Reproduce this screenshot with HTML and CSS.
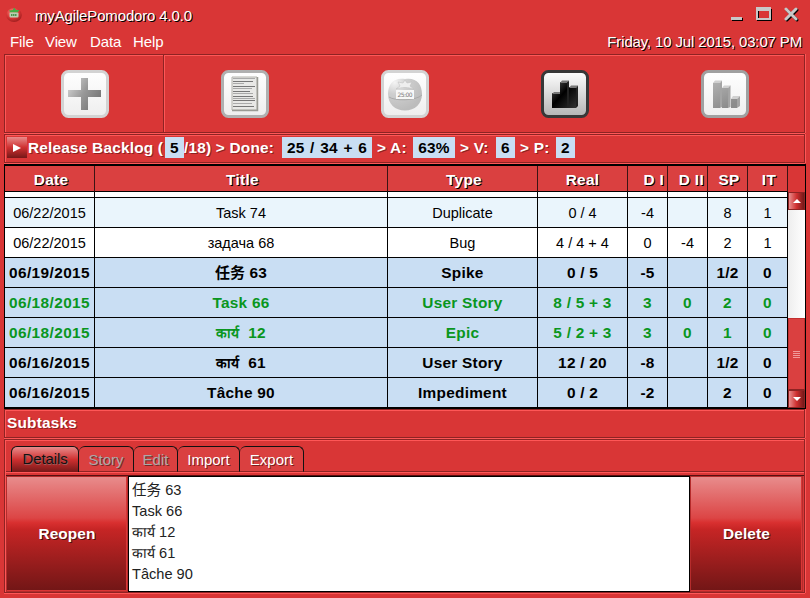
FILE: index.html
```html
<!DOCTYPE html>
<html lang="en">
<head>
<meta charset="utf-8">
<title>myAgilePomodoro 4.0.0</title>
<link rel="stylesheet" href="styles.css">
</head>
<body>
<div class="window">
  <header class="titlebar">
    <svg class="logo" width="16" height="16" viewBox="0 0 16 16">
      <defs><radialGradient id="tomato" cx=".4" cy=".3" r=".7"><stop offset="0" stop-color="#ff8a80"/><stop offset=".6" stop-color="#d83434"/><stop offset="1" stop-color="#a32020"/></radialGradient></defs>
      <ellipse cx="8" cy="8" rx="7.800" ry="7" fill="url(#tomato)"/>
      <path d="M3 3.500l4-.5 1-2.500L10 3l3.500 0-2 2.500h-7z" fill="#3fb045"/>
      <rect x="3.500" y="5.500" width="9" height="5" rx="1" fill="#b9cfb2"/><path d="M5 8h6" stroke="#4f9450" stroke-width="2" stroke-dasharray="1.500 .5"/>
    </svg>
    <h1 class="title">myAgilePomodoro 4.0.0</h1>
    <svg class="controls" width="72" height="18" viewBox="0 0 72 18">
      <path d="M2 11h11v3H2z" fill="#000"/><path d="M1 10h11v3H1z" fill="#c8c8c8"/>
      <path d="M28 3h13v10H28z" fill="none" stroke="#000" stroke-width="2"/>
      <path d="M26 0h15v13H26zM28 4v7h11V4z" fill="#c8c8c8" fill-rule="evenodd"/>
      <path d="M57 3l10 10m0-10L57 13" stroke="#000" stroke-width="3" stroke-linecap="round"/>
      <path d="M56 2l10 10m0-10L56 12" stroke="#c8c8c8" stroke-width="3" stroke-linecap="round"/>
    </svg>
  </header>
  <nav class="menubar">
    <span class="t-file">File</span><span class="t-view">View</span><span class="t-data">Data</span><span class="t-help">Help</span>
    <time class="clock">Friday, 10 Jul 2015, 03:07 PM</time>
  </nav>

  <section class="panel toolbar">
    <div class="tool first">
      <svg width="48" height="48" viewBox="0 0 48 48">
        <defs>
          <linearGradient id="face" x2="0" y2="1"><stop offset="0" stop-color="#fff"/><stop offset="1" stop-color="#eee"/></linearGradient>
          <linearGradient id="faceDark" x2="0" y2="1"><stop offset="0" stop-color="#fff"/><stop offset="1" stop-color="#b4b4b4"/></linearGradient>
          <linearGradient id="plus" x2="1" y2=".6"><stop offset="0" stop-color="#ddd"/><stop offset=".55" stop-color="#999"/><stop offset="1" stop-color="#777"/></linearGradient>
        </defs>
        <rect x="1.500" y="1.500" width="45" height="45" rx="6" fill="url(#face)" stroke="#d3d3d3" stroke-width="3"/>
        <path d="M20 8h7v12h13v7H27v13h-7V27H7v-7h13z" fill="url(#plus)"/>
      </svg>
    </div>
    <div class="tool">
      <svg width="48" height="48" viewBox="0 0 48 48">
        <rect x="1.500" y="1.500" width="45" height="45" rx="6" fill="url(#face)" stroke="#b0b0b0" stroke-width="3"/>
        <path d="M11 7h25v33H11z" fill="#e8e8e6" stroke="#b4b4ae"/><path d="M36.500 7v33.500H11" fill="none" stroke="#9a9a94" stroke-width="1.500"/>
        <path d="M12 8.500h22M12 13.500h11M12 18.500h19M12 23.500h20M12 28.500h22M12 33.500h19" stroke="#aaa"/>
        <path d="M12 11.500h20M12 16.500h22M12 21.500h17M12 26.500h20M12 30.500h22M12 36.500h21" stroke="#777"/>
      </svg>
    </div>
    <div class="tool">
      <svg width="48" height="48" viewBox="0 0 48 48">
        <defs><radialGradient id="grey" cx=".2" cy=".12" r=".9"><stop offset="0" stop-color="#f4f4f4"/><stop offset=".4" stop-color="#cfcfcf"/><stop offset="1" stop-color="#bcbcbc"/></radialGradient></defs>
        <rect x="1.500" y="1.500" width="45" height="45" rx="6" fill="url(#face)" stroke="#d3d3d3" stroke-width="3"/>
        <path d="M24 9C13 7 7 14 7 24s7 16.500 17 16.500S41 34 41 24 35 7 24 9z" fill="url(#grey)"/>
        <path d="M8 27c5 4 27 4 33-2" fill="none" stroke="#aaa"/>
        <path d="M17 12l5 1 2-3 2 3 5-1-2 4 4 3c-6-2-12-2-18 0l4-3z" fill="#eee" stroke="#bbb" stroke-width=".5"/>
        <path d="M15 20h18v9H15z" fill="#f7f7f7"/>
        <text class="lcd" x="24" y="27" text-anchor="middle" textLength="15">25:00</text>
      </svg>
    </div>
    <div class="tool">
      <svg width="48" height="48" viewBox="0 0 48 48">
        <defs><linearGradient id="bar" x2="1" y2="1"><stop offset="0" stop-color="#555"/><stop offset=".45" stop-color="#000"/><stop offset="1" stop-color="#333"/></linearGradient></defs>
        <rect x="1.500" y="1.500" width="45" height="45" rx="6" fill="url(#faceDark)" stroke="#383838" stroke-width="3"/>
        <path d="M11 23h8v15h-8zM19 12h9v26h-9zM28 17h7v21h-7z" fill="url(#bar)"/>
        <path d="M11 24l2-2h6v2zM19 13l2-2.500h7L26 13zM28 18l2-2.500h7L35 18z" fill="#777"/>
        <path d="M26 13l2-2.500V37l-2 1zM35 18l2-2.500V36l-2 2z" fill="#222"/>
      </svg>
    </div>
    <div class="tool">
      <svg width="48" height="48" viewBox="0 0 48 48">
        <defs><linearGradient id="barGrey" x2=".5" y2="1"><stop offset="0" stop-color="#b0b0b0"/><stop offset="1" stop-color="#8c8c8c"/></linearGradient></defs>
        <rect x="1.500" y="1.500" width="45" height="45" rx="6" fill="url(#face)" stroke="#a0a0a0" stroke-width="3"/>
        <path d="M12 13h7v25h-7zM21 18h6v20h-6zM30 29h6v9h-6z" fill="url(#barGrey)"/>
        <path d="M12 13l2-2.500h7L19 13zM21 18l2-2.500h7L27 18zM30 29l2-3h7l-3 3z" fill="#d0d0d0"/>
        <path d="M19 13l2-2.500V37l-2 1zM27 18l2.500-2.500V37L27 38zM36 29l3-3v10l-3 2z" fill="#a4a4a4"/>
      </svg>
    </div>
  </section>

  <section class="panel status">
    <button class="play"><svg width="8" height="8" viewBox="0 0 8 8"><path d="M0 0l8 4-8 4z" fill="#fff"/></svg></button>
    <span class="s1">Release Backlog (</span><b class="w19">5</b><span class="s2">/18) &gt; Done:</span><b class="w90">25 / 34 + 6</b><span class="s3">&gt; A:</span><b class="w42">63%</b><span class="s4">&gt; V:</span><b class="w19">6</b><span class="s5">&gt; P:</span><b class="w19">2</b>
  </section>

  <section class="grid">
    <div class="table">
      <div class="row head"><div>Date</div><div>Title</div><div>Type</div><div>Real</div><div class="right">D I</div><div class="right">D II</div><div>SP</div><div>IT</div></div>
      <div class="row sliver"><div></div><div></div><div></div><div></div><div></div><div></div><div></div><div></div></div>
      <div class="row tint"><div>06/22/2015</div><div>Task 74</div><div>Duplicate</div><div>0 / 4</div><div>-4</div><div></div><div>8</div><div>1</div></div>
      <div class="row"><div>06/22/2015</div><div>задача 68</div><div>Bug</div><div>4 / 4 + 4</div><div>0</div><div>-4</div><div>2</div><div>1</div></div>
      <div class="row sel"><div>06/19/2015</div><div><span class="han">任务</span> 63</div><div>Spike</div><div>0 / 5</div><div>-5</div><div></div><div>1/2</div><div>0</div></div>
      <div class="row sel done"><div>06/18/2015</div><div>Task 66</div><div>User Story</div><div>8 / 5 + 3</div><div>3</div><div>0</div><div>2</div><div>0</div></div>
      <div class="row sel done"><div>06/18/2015</div><div><span class="hindi">कार्य</span>  12</div><div>Epic</div><div>5 / 2 + 3</div><div>3</div><div>0</div><div>1</div><div>0</div></div>
      <div class="row sel"><div>06/16/2015</div><div><span class="hindi">कार्य</span>  61</div><div>User Story</div><div>12 / 20</div><div>-8</div><div></div><div>1/2</div><div>0</div></div>
      <div class="row sel"><div>06/16/2015</div><div>Tâche 90</div><div>Impediment</div><div>0 / 2</div><div>-2</div><div></div><div>2</div><div>0</div></div>
    </div>
    <div class="scroll">
      <div class="corner"></div>
      <button class="arrow"><svg width="8" height="4" viewBox="0 0 8 4"><path d="M4 0l4 4H0z" fill="#fff"/></svg></button>
      <div class="track"></div>
      <div class="thumb"><i></i><i></i><i></i><i></i></div>
      <button class="arrow"><svg width="8" height="4" viewBox="0 0 8 4"><path d="M4 4l4-4H0z" fill="#fff"/></svg></button>
    </div>
  </section>

  <section class="panel subtasks">Subtasks</section>

  <section class="panel bottom">
    <div class="tabs">
      <div class="tab active w68">Details</div><div class="tab off w55">Story</div><div class="tab off w44">Edit</div><div class="tab w62">Import</div><div class="tab w64">Export</div>
    </div>
    <div class="content">
      <button class="big">Reopen</button>
      <div class="list"><div>任务 63</div><div>Task 66</div><div><span class="hindi">कार्य</span> 12</div><div><span class="hindi">कार्य</span> 61</div><div>Tâche 90</div></div>
      <button class="big delete">Delete</button>
    </div>
  </section>
</div>
</body>
</html>
```
FILE: styles.css
```css
* { box-sizing: border-box; }
body { margin: 0; background: #d93636; font: 15px "Liberation Sans", "Noto Sans CJK SC", sans-serif; color: #fff; }
.window { width: 810px; height: 598px; overflow: hidden; background: #d93636; padding: 0 4px; display: flex; flex-direction: column; }
button { font: inherit; color: inherit; border: 0; padding: 0; margin: 0; display: flex; align-items: center; justify-content: center; }
span, b, time, .row > div { white-space: pre; }

.titlebar { height: 32px; display: flex; align-items: flex-start; padding: 7px 4px 0 2px; }
.title { margin: 0 0 0 13px; font: inherit; line-height: 18px; text-shadow: 1px 1px #000; flex: 1; letter-spacing: -0.15px; }
.logo { display: block; }
.menubar { height: 22px; display: flex; padding: 0 4px 0 6px; line-height: 20px; letter-spacing: -0.1px; }
.t-file { width: 35px; } .t-view { width: 45px; } .t-data { width: 43px; } .t-help { flex: 1; }
.clock { text-shadow: 1px 1px #000; letter-spacing: -0.15px; }

.panel { border: 1px solid #8e2323; box-shadow: inset 1px 1px #ff5757, 0 1px #ff5757, 1px 0 #ff5757; width: 801px; flex: none; }
.toolbar { height: 79px; margin-bottom: 1px; display: flex; padding-left: 1px; }
.tool { width: 160px; flex: none; display: flex; align-items: center; justify-content: center; }
.tool.first { width: 158px; padding-left: 1px; border-right: 1px solid #8e2323; box-shadow: 1px 0 #ff5757; margin-right: 1px; }
.tool svg { display: block; }
.lcd { font: 6px "DejaVu Sans", sans-serif; fill: #777; }

.status { height: 29px; margin-bottom: 1px; display: flex; align-items: flex-start; padding: 2px 0 0 2px; font-weight: bold; font-size: 15.400px; letter-spacing: .2px; line-height: 22px; text-shadow: 1px 1px #8e2020; }
.play { width: 20px; height: 21px; margin-right: 1px; background: linear-gradient(#e88c8c, #cf3030 50%, #751818); }
.status b { background: #c9def3; color: #000; text-align: center; text-shadow: none; height: 21px; flex: none; letter-spacing: .2px; }
.status .w90 { word-spacing: 1.200px; }
.status span { flex: none; }
.w19 { width: 19px; } .w90 { width: 90px; } .w42 { width: 42px; }
.s1 { width: 137px; } .s2 { width: 98px; } .s3, .s4, .s5 { width: 41px; padding-left: 5px; }

.grid { height: 245px; width: 802px; flex: none; display: flex; border: 1px solid #000; border-top-width: 2px; background: #000; }
.table { width: 783px; color: #000; }
.row { display: grid; grid-template-columns: 90px 293px 150px 90px 40px 40px 40px 40px; height: 30px; background: #fff; line-height: 31px; font-size: 14.500px; text-align: center; }
.row > div { border-right: 1px solid #000; border-bottom: 1px solid #000; overflow: hidden; }
.head { height: 26px; background: #da4040; color: #fff; font-weight: bold; font-size: 15.400px; letter-spacing: .3px; line-height: 27px; text-shadow: 1px 1px #000; }
.head > div { padding-left: 3px; border-right-color: #3a1414; }
.head > div:nth-child(4) { padding-left: 0; }
.head .right { text-align: right; padding-right: 3px; }
.sliver { height: 6px; }
.tint { background: #eaf5fc; }
.sel { background: #c9def3; font-weight: bold; font-size: 15.400px; letter-spacing: .25px; line-height: 30px; }
.sel > div:first-child { letter-spacing: .4px; }
.done { color: #0a961e; }
.hindi { font-size: .9em; letter-spacing: 0; }
.han { font-size: 15px; letter-spacing: 0; }

.scroll { width: 17px; display: flex; flex-direction: column; }
.corner { height: 26px; background: #d93636; }
.arrow { height: 18px; flex: none; background: linear-gradient(90deg, #e88c8c, #cf3030 50%, #751818); border: 1px solid #8e2323; }
.track { height: 108px; flex: none; background: linear-gradient(90deg, #eee, #fff); }
.thumb { flex: 1; background: #da4040; border: 1px solid #c22f2f; border-bottom-color: #8e2323; display: flex; flex-direction: column; align-items: center; justify-content: center; gap: 1px; }
.thumb i { width: 7px; height: 1px; background: #f09a9a; }

.subtasks { height: 29px; margin-bottom: 1px; padding-left: 2px; font-weight: bold; font-size: 15.400px; letter-spacing: .2px; line-height: 26px; text-shadow: 1px 1px #8e2020; }
.bottom { height: 154px; padding: 6px 0 0 1px; display: flex; flex-direction: column; }
.tabs { height: 26px; display: flex; padding-left: 5px; border-bottom: 1px solid #8e2323; box-shadow: 0 1px #ff5757; }
.tab { height: 26px; border: 1px solid #111; border-bottom-color: #8e2323; border-left-width: 0; border-radius: 6px 6px 0 0; background: #da4040; text-align: center; line-height: 26px; text-shadow: 1px 1px #7a1d1d; }
.tab.active { border-left-width: 1px; border-bottom: 0; background: linear-gradient(#e88c8c, #cf3030 50%, #751818); color: #111; line-height: 24px; text-shadow: 1px 1px #9b5a5a; letter-spacing: -0.1px; }
.tab.off { color: #aaa; text-shadow: 1px 1px #762929; }
.w68 { width: 68px; } .w55 { width: 55px; } .w44 { width: 44px; } .w62 { width: 62px; } .w64 { width: 64px; }
.content { margin-top: 3px; flex: 1; display: flex; border-top: 1px solid #571010; }
.big { width: 122px; background: linear-gradient(#e88c8c, #dc4545 36%, #d93030 40%, #c62525 46%, #711616); border: 1px solid #b52c2c; box-shadow: inset -1px -1px #d93636; font-weight: bold; font-size: 15.400px; letter-spacing: .1px; text-shadow: 1px 1px #4b1010; }
.delete { width: 113px; }
.list { width: 562px; background: #fff; color: #222; border: 1px solid #000; padding: 3px 0 0 3px; font: 14.600px/21px "Liberation Sans", "Noto Sans CJK SC", sans-serif; }
.list > div { height: 21px; }
.list .hindi { font-size: 14px; }
```
